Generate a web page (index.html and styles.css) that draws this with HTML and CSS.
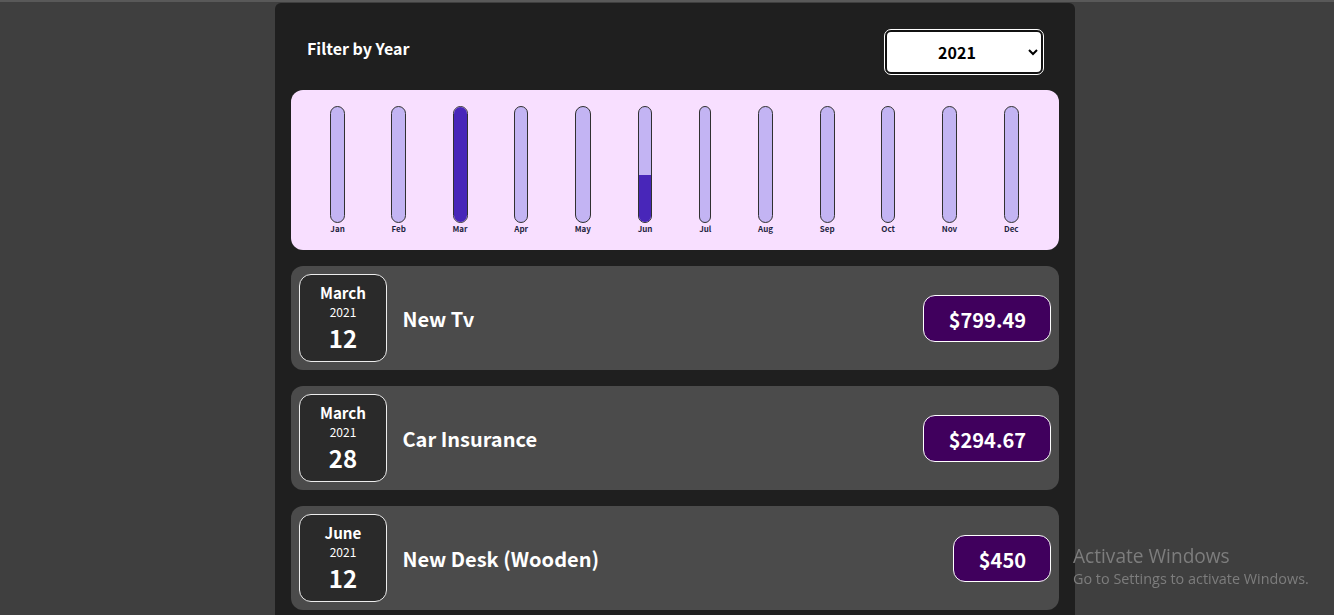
FILE: index.html
```html
<!DOCTYPE html>
<html lang="en">
<head>
    <meta charset="UTF-8">
    <meta name="viewport" content="width=device-width, initial-scale=1.0">
    <title>Expenses</title>
    <link rel="stylesheet" href="styles.css">
</head>
<body>
    <div class="expenses">
        <div class="filter">
            <label for="year">Filter by Year</label>
            <select id="year">
                <option>2022</option>
                <option selected>2021</option>
                <option>2020</option>
                <option>2019</option>
            </select>
        </div>

        <div class="chart">
            <div class="chart-bar"><div class="bar-inner"></div><div class="bar-label">Jan</div></div>
            <div class="chart-bar"><div class="bar-inner"></div><div class="bar-label">Feb</div></div>
            <div class="chart-bar"><div class="bar-inner"><div class="bar-fill full"></div></div><div class="bar-label">Mar</div></div>
            <div class="chart-bar"><div class="bar-inner"></div><div class="bar-label">Apr</div></div>
            <div class="chart-bar"><div class="bar-inner"></div><div class="bar-label">May</div></div>
            <div class="chart-bar"><div class="bar-inner"><div class="bar-fill" style="height: 41%"></div></div><div class="bar-label">Jun</div></div>
            <div class="chart-bar"><div class="bar-inner"></div><div class="bar-label">Jul</div></div>
            <div class="chart-bar"><div class="bar-inner"></div><div class="bar-label">Aug</div></div>
            <div class="chart-bar"><div class="bar-inner"></div><div class="bar-label">Sep</div></div>
            <div class="chart-bar"><div class="bar-inner"></div><div class="bar-label">Oct</div></div>
            <div class="chart-bar"><div class="bar-inner"></div><div class="bar-label">Nov</div></div>
            <div class="chart-bar"><div class="bar-inner"></div><div class="bar-label">Dec</div></div>
        </div>

        <div class="expense-item">
            <div class="expense-date">
                <div class="month">March</div>
                <div class="year">2021</div>
                <div class="day">12</div>
            </div>
            <h2>New Tv</h2>
            <div class="price">$799.49</div>
        </div>

        <div class="expense-item">
            <div class="expense-date">
                <div class="month">March</div>
                <div class="year">2021</div>
                <div class="day">28</div>
            </div>
            <h2>Car Insurance</h2>
            <div class="price">$294.67</div>
        </div>

        <div class="expense-item">
            <div class="expense-date">
                <div class="month">June</div>
                <div class="year">2021</div>
                <div class="day">12</div>
            </div>
            <h2>New Desk (Wooden)</h2>
            <div class="price">$450</div>
        </div>
    </div>

    <!-- Windows watermark -->
    <div class="watermark">
        <div class="watermark-title">Activate Windows</div>
        <div class="watermark-text">Go to Settings to activate Windows.</div>
    </div>
</body>
</html>
```

FILE: styles.css
```css
html, body {
    height: 100%;
}

body {
    font-family: "Noto Sans CJK JP", "Noto Sans", sans-serif;
    background: #3f3f3f;
    margin: 0;
    border-top: 2px solid #595959;
    box-sizing: border-box;
    overflow: hidden;
}

.expenses {
    width: 800px;
    margin: 1px 0 0 275px;
    padding: 16px;
    box-sizing: border-box;
    background: #1f1f1f;
    border-radius: 6px;
}

.filter {
    display: flex;
    justify-content: space-between;
    align-items: flex-start;
    padding: 10px 15px 0 16px;
    height: 71px;
    box-sizing: border-box;
    color: white;
}

.filter label {
    font-weight: bold;
    font-size: 16px;
    line-height: 24px;
    margin-top: 7px;
}

.filter select {
    width: 158px;
    height: 44px;
    margin-top: 1px;
    margin-right: 1px;
    padding-right: 2px;
    font-family: inherit;
    font-size: 16px;
    font-weight: bold;
    text-align: center;
    background: white;
    color: black;
    border: 2px solid #111;
    outline: 1px solid white;
    border-radius: 6px;
}

.chart {
    display: flex;
    justify-content: space-around;
    height: 160px;
    padding: 16px 17px 16px 16px;
    box-sizing: border-box;
    background: #f8dfff;
    border-radius: 12px;
    margin-bottom: 16px;
}

.chart-bar {
    display: flex;
    flex-direction: column;
    align-items: stretch;
}

.bar-inner {
    flex: none;
    height: 117px;
    box-sizing: border-box;
    border: 1px solid #313131;
    border-radius: 12px;
    background: #c3b4f3;
    overflow: hidden;
    display: flex;
    align-items: flex-end;
}

.bar-fill {
    width: 100%;
    background: #4826b9;
}

.bar-fill.full {
    height: 100%;
}

.bar-label {
    font-size: 8px;
    font-weight: bold;
    line-height: 12px;
    text-align: center;
    color: #1f1f3f;
}

.expense-item {
    display: flex;
    align-items: center;
    height: 104px;
    box-sizing: border-box;
    padding: 8px;
    margin-bottom: 16px;
    background: #4b4b4b;
    border-radius: 12px;
}

.expense-date {
    width: 88px;
    height: 88px;
    box-sizing: border-box;
    padding-top: 1px;
    display: flex;
    flex-direction: column;
    align-items: center;
    justify-content: center;
    background: #2a2a2a;
    border: 1px solid #ececec;
    border-radius: 12px;
    color: white;
}

.month {
    font-size: 15.2px;
    font-weight: bold;
    line-height: 22px;
}

.year {
    font-size: 12px;
    line-height: 17px;
}

.day {
    font-size: 24px;
    font-weight: bold;
    line-height: 36px;
}

.expense-item h2 {
    flex: 1;
    margin: 0 0 0 15.5px;
    font-size: 20px;
    font-weight: bold;
    color: white;
}

.price {
    padding: 2px 24px 0 25px;
    height: 47px;
    box-sizing: border-box;
    display: flex;
    align-items: center;
    font-size: 20px;
    font-weight: bold;
    color: white;
    background: #40005d;
    border: 1px solid white;
    border-radius: 12px;
}

.watermark {
    position: fixed;
    left: 1073px;
    top: 543px;
    color: #7d7d7d;
    font-family: "Open Sans", sans-serif;
}

.watermark-title {
    font-size: 19.1px;
    line-height: 26px;
}

.watermark-text {
    font-size: 14.4px;
    line-height: 20px;
}
```
